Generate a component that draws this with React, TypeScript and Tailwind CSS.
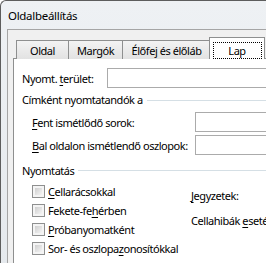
const U = ({ children }: { children: string }) => <span className="underline underline-offset-2">{children}</span>;

const Tab = ({ label, width }: { label: string; width: string }) => (
  <div
    className={`${width} h-[19px] -mr-px flex items-center justify-center border border-b-0 border-[#8e8f8f] bg-gradient-to-b from-[#f3f3f3] to-[#e2e2e2]`}
  >
    {label}
  </div>
);

const Checkbox = ({ children }: { children: React.ReactNode }) => (
  <div className="flex items-center h-[19px]">
    <div className="w-[13px] h-[13px] shrink-0 border border-[#8e8f8f] bg-[#f4f4f4] p-[2px]">
      <div className="w-full h-full bg-gradient-to-br from-[#cfcfcf] to-[#f4f4f4]" />
    </div>
    <span className="ml-[3px]">{children}</span>
  </div>
);

const Field = () => <div className="flex-1 h-[20px] border border-[#ababab] bg-white" />;

export default function App() {
  return (
    <div className="w-[266px] h-[263px] overflow-hidden bg-white font-['Segoe_UI','Noto_Sans',sans-serif] text-[11px] tracking-[-0.45px] text-black leading-none whitespace-nowrap">
      <div className="w-[420px] h-[300px] rounded-tl-[6px] border-l border-t border-[#5d5d5d] bg-gradient-to-b from-[#eef1f4] to-[#e4e8ec] pl-[6px]">
        <div className="h-[28px] flex items-center pl-[1px] text-[11.5px] tracking-[-0.3px] pt-[1px]">Oldalbeállítás</div>
        <div className="h-full border-l border-t border-[#a5a5a5] bg-[#f0f0f0] pl-[5px] pt-[7px]">
          <div className="flex items-end h-[22px] pl-[3px] relative z-10">
            <Tab label="Oldal" width="w-[53px]" />
            <Tab label="Margók" width="w-[55px]" />
            <Tab label="Élőfej és élőláb" width="w-[89px]" />
            <div className="w-[56px] h-[22px] -ml-[1px] border border-b-0 border-[#8e8f8f] bg-white flex items-start justify-center pt-[5px]">
              <div className="w-[47px] h-[15px] outline outline-1 outline-dotted outline-black flex items-center justify-center">Lap</div>
            </div>
          </div>
          <div className="-mt-px h-full border border-[#8e8f8f] bg-white pl-[8px] pt-[9px]">
            <div className="flex items-center h-[20px]">
              <span className="w-[85px] shrink-0">Nyomt. <U>t</U>erület:</span>
              <Field />
            </div>
            <div className="flex items-center h-[20px] mt-px">
              <span>Címként nyomtatandók a</span>
              <div className="flex-1 ml-[4px] mt-[2px] border-t border-[#d5dfe5]" />
            </div>
            <div className="pl-[10px] mt-[3px] flex flex-col gap-[3px]">
              <div className="flex items-center h-[20px]">
                <span className="w-[163px] shrink-0"><U>F</U>ent ismétlődő sorok:</span>
                <Field />
              </div>
              <div className="flex items-center h-[20px]">
                <span className="w-[163px] shrink-0"><U>B</U>al oldalon ismétlendő oszlopok:</span>
                <Field />
              </div>
            </div>
            <div className="flex items-center h-[20px] mt-[5px]">
              <span>Nyomtatás</span>
              <div className="flex-1 ml-[4px] border-t border-[#d5dfe5]" />
            </div>
            <div className="flex pl-[10px] mt-[2px]">
              <div className="w-[159px] shrink-0 flex flex-col">
                <Checkbox><U>C</U>ellarácsokkal</Checkbox>
                <Checkbox>Fekete-fe<U>h</U>érben</Checkbox>
                <Checkbox><U>P</U>róbanyomatként</Checkbox>
                <Checkbox>Sor- és oszlopa<U>z</U>onosítókkal</Checkbox>
              </div>
              <div className="flex flex-col pt-[8px] gap-[13px]">
                <span className="h-[12px]"><U>J</U>egyzetek:</span>
                <span className="h-[12px]">Cellahibák <U>e</U>setén:</span>
              </div>
            </div>
          </div>
        </div>
      </div>
    </div>
  );
}
